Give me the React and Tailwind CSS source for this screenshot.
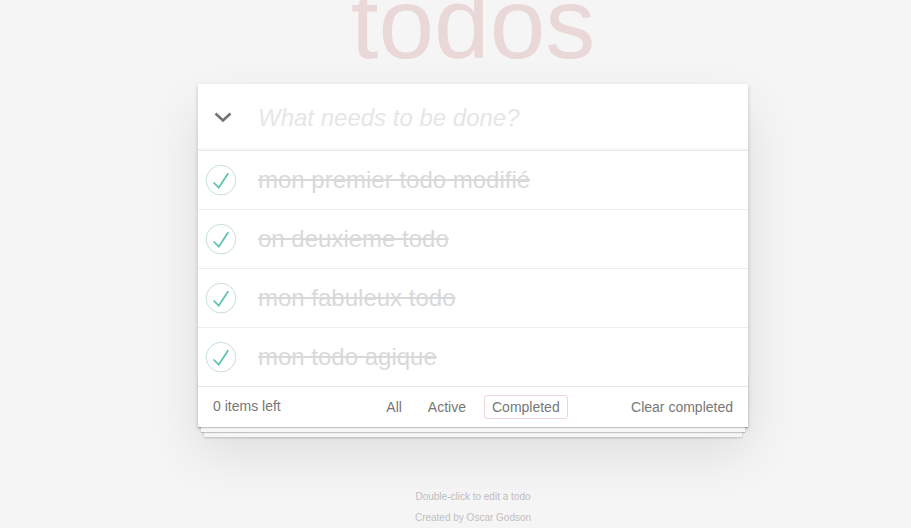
const TODOS = [
  { id: 1, title: 'mon premier todo modifié', done: true },
  { id: 2, title: 'on deuxieme todo', done: true },
  { id: 3, title: 'mon fabuleux todo', done: true },
  { id: 4, title: 'mon todo agique', done: true },
];

const FILTERS = ['All', 'Active', 'Completed'];

// round checkbox, same drawing as the todomvc background svg
function CheckCircle({ done }) {
  return (
    <svg width="40" height="40" viewBox="-10 -18 100 135" className="shrink-0">
      <circle cx="50" cy="50" r="50" fill="none" stroke={done ? '#bddad5' : '#ededed'} strokeWidth="3" />
      {done && <path fill="#5dc2af" d="M72 25L42 71 27 56l-4 4 20 20 34-52z" />}
    </svg>
  );
}

function TodoItem({ todo, last }) {
  return (
    <li className={`relative flex items-center ${last ? '' : 'border-b border-[#ededed]'}`}>
      <div className="absolute left-0 top-0 bottom-0 flex items-center">
        <CheckCircle done={todo.done} />
      </div>
      <label
        className={`block py-[15px] pl-[60px] pr-[15px] text-[24px] leading-[28px] ${
          todo.done ? 'text-[#d9d9d9] line-through' : 'text-[#4d4d4d]'
        }`}
      >
        {todo.title}
      </label>
    </li>
  );
}

export default function App() {
  const left = TODOS.filter((t) => !t.done).length;
  const selected = 'Completed';

  return (
    <div className="h-screen overflow-hidden bg-[#f5f5f5] font-['Liberation_Sans',Arial,sans-serif] text-[#4d4d4d] antialiased">
      <div className="flex flex-col items-center pl-[35px]">
        <h1 className="mt-[-27px] w-[550px] text-center text-[100px] leading-[100px] font-thin text-[rgba(175,47,47,0.15)]">
          todos
        </h1>

        <section className="relative mt-[11px] w-[550px] bg-white shadow-[0_2px_4px_0_rgba(0,0,0,0.2),0_25px_50px_0_rgba(0,0,0,0.1)]">
          {/* header */}
          <div className="relative">
            <div className="absolute left-0 top-0 bottom-0 flex w-[45px] items-center justify-center pl-[4px] pt-[1px]">
              <svg width="18" height="11" viewBox="0 0 18 11">
                <polyline points="1.5,1.5 9,8.5 16.5,1.5" fill="none" stroke="#737373" strokeWidth="2.6" />
              </svg>
            </div>
            <input
              className="block w-full pt-[17px] pb-[15px] pl-[60px] pr-[16px] text-[24px] leading-[33.6px] outline-none shadow-[inset_0_-2px_1px_rgba(0,0,0,0.03)] placeholder:italic placeholder:text-[#e6e6e6]"
              placeholder="What needs to be done?"
            />
          </div>

          {/* list */}
          <ul className="border-t border-[#e6e6e6]">
            {TODOS.map((t, i) => (
              <TodoItem key={t.id} todo={t} last={i === TODOS.length - 1} />
            ))}
          </ul>

          {/* footer */}
          <footer className="relative grid h-[41px] grid-cols-[1fr_auto_1fr] items-center border-t border-[#e6e6e6] px-[15px] text-[14px] text-[#777]">
            <div className="pointer-events-none absolute left-0 right-0 bottom-0 h-[50px] shadow-[0_1px_1px_rgba(0,0,0,0.2),0_8px_0_-3px_#f6f6f6,0_9px_1px_-3px_rgba(0,0,0,0.2),0_16px_0_-6px_#f6f6f6,0_17px_2px_-6px_rgba(0,0,0,0.2)]" />
            <span className="relative">
              <strong className="font-normal">{left}</strong> items left
            </span>
            <ul className="relative flex gap-[10px]">
              {FILTERS.map((f) => (
                <li key={f}>
                  <a
                    className={`block rounded-[3px] border px-[7px] py-[3px] leading-4 ${
                      f === selected ? 'border-[rgba(175,47,47,0.2)]' : 'border-transparent'
                    }`}
                  >
                    {f}
                  </a>
                </li>
              ))}
            </ul>
            <button className="relative justify-self-end leading-5 text-[#777]">Clear completed</button>
          </footer>
        </section>

        <footer className="mt-[65px] flex flex-col items-center gap-[11px] text-[10px] leading-[10px] text-[#bfbfbf]">
          <p>Double-click to edit a todo</p>
          <p>Created by Oscar Godson</p>
        </footer>
      </div>
    </div>
  );
}
